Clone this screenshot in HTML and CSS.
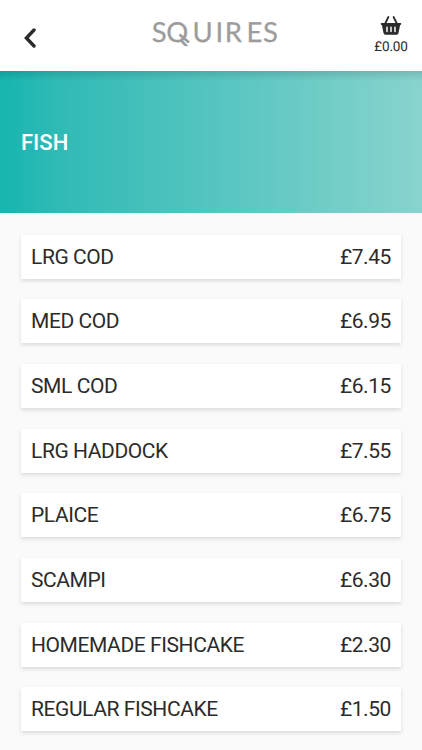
FILE: index.html
```html
<!DOCTYPE html>
<html lang="en">
<head>
    <meta charset="UTF-8">
    <meta name="viewport" content="width=device-width, initial-scale=1.0">
    <title>Squires - Fish</title>
    <link rel="stylesheet" href="styles.css">
</head>
<body>
    <header class="header">
        <a class="back" href="#" aria-label="Back">
            <svg width="14" height="22" viewBox="0 0 14 22">
                <path d="M12 3 L4.4 11 L12 19" />
            </svg>
        </a>
        <svg class="logo" width="130" height="32" viewBox="0 0 130 32">
            <text x="2.8 17.3 43.4 66.6 75.8 97.6 114" y="26">SQUIRES</text>
            <path d="M30.5 18.5 L40 26.5" />
        </svg>
        <a class="basket" href="#">
            <svg width="22" height="21" viewBox="0 0 22 21">
                <path class="handle" d="M4.7 9.5 L8.4 2 M17.3 9.5 L13.6 2" />
                <path d="M1.6 8 H20.4 Q21.4 8 21.3 9 Q21.2 10 20.1 10.1 L18.5 18 Q18.2 19.8 16.6 19.8 H5.4 Q3.8 19.8 3.5 18 L1.9 10.1 Q.8 10 .7 9 Q.6 8 1.6 8 Z" />
                <path class="slots" d="M7 12.2 V16.4 M11 12.2 V16.4 M15 12.2 V16.4" />
            </svg>
            <span>£0.00</span>
        </a>
    </header>

    <div class="banner">
        <h1>FISH</h1>
    </div>

    <ul class="menu">
        <li class="item"><span>LRG COD</span><span>£7.45</span></li>
        <li class="item"><span>MED COD</span><span>£6.95</span></li>
        <li class="item"><span>SML COD</span><span>£6.15</span></li>
        <li class="item"><span>LRG HADDOCK</span><span>£7.55</span></li>
        <li class="item"><span>PLAICE</span><span>£6.75</span></li>
        <li class="item"><span>SCAMPI</span><span>£6.30</span></li>
        <li class="item"><span>HOMEMADE FISHCAKE</span><span>£2.30</span></li>
        <li class="item"><span>REGULAR FISHCAKE</span><span>£1.50</span></li>
    </ul>
</body>
</html>
```
FILE: styles.css
```css
* {
    box-sizing: border-box;
}

body {
    margin: 0;
    height: 750px;
    overflow: hidden;
    font-family: Roboto, sans-serif;
    color: #2b2b2b;
    background: #fafafa;
}

a {
    color: inherit;
    text-decoration: none;
}

.header {
    display: grid;
    grid-template-columns: 62px 1fr 62px;
    height: 71.4px;
    background: #fff;
}

.back {
    padding: 27px 0 0 22px;
}

.back svg {
    display: block;
}

.back path {
    fill: none;
    stroke: #2b2b2b;
    stroke-width: 3.4;
    stroke-linecap: round;
}

.logo {
    justify-self: center;
    margin-top: 16px;
    margin-left: 6px;
    overflow: visible;
}

.logo text {
    font-family: Lato, sans-serif;
    font-size: 27.5px;
    text-rendering: geometricPrecision;
    fill: #9c9c9c;
    stroke: #9c9c9c;
    stroke-width: 0.25;
}

.logo path {
    stroke: #9c9c9c;
    stroke-width: 2.6;
}

.basket {
    display: flex;
    flex-direction: column;
    align-items: center;
    padding-top: 15px;
    font-size: 13.5px;
    line-height: 16px;
    letter-spacing: -0.1px;
    text-rendering: geometricPrecision;
}

.basket span {
    margin-top: 3px;
}

.basket path {
    fill: #2b2b2b;
}

.basket .handle {
    fill: none;
    stroke: #2b2b2b;
    stroke-width: 1.8;
    stroke-linecap: round;
}

.basket .slots {
    stroke: #fff;
    stroke-width: 1.5;
    stroke-linecap: round;
}

.banner {
    display: flex;
    align-items: center;
    height: 141.5px;
    padding-left: 21px;
    color: #fff;
    background:
        linear-gradient(to bottom, rgba(0, 0, 0, 0.12), rgba(0, 0, 0, 0) 10px),
        linear-gradient(to right, #15b5b0 0%, #2fbab5 13%, #88d3ce 100%);
}

.banner h1 {
    margin: 0;
    font-size: 22px;
    font-weight: 500;
}

.menu {
    display: flex;
    flex-direction: column;
    gap: 20.65px;
    margin: 0;
    padding: 21.8px 21px;
    list-style: none;
}

.item {
    display: flex;
    flex-shrink: 0;
    justify-content: space-between;
    align-items: center;
    height: 44px;
    padding: 0 10px;
    font-size: 21px;
    letter-spacing: -0.42px;
    background: #fff;
    box-shadow: 0 2px 4px rgba(0, 0, 0, 0.13);
}
```
